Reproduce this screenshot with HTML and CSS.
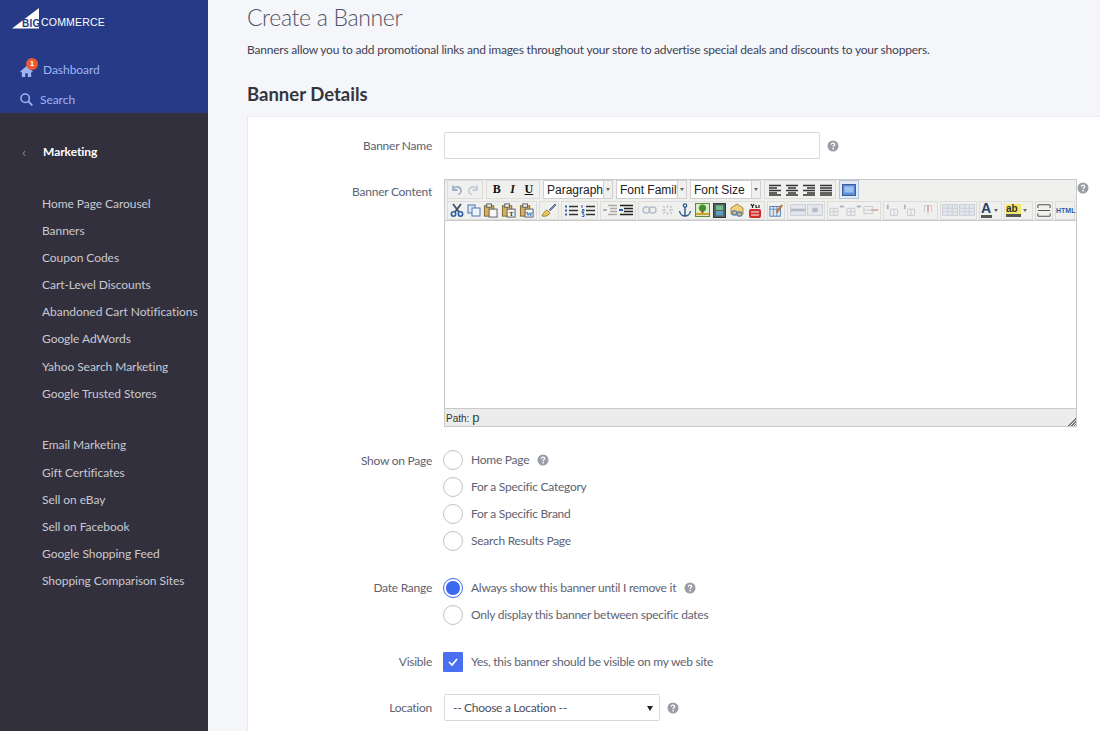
FILE: index.html
```html
<!DOCTYPE html>
<html lang="en">
<head>
    <meta charset="UTF-8">
    <meta name="viewport" content="width=device-width, initial-scale=1.0">
    <title>Create a Banner</title>
    <link rel="stylesheet" href="styles.css">
</head>
<body>
    <svg class="sprites" width="0" height="0">
        <symbol id="help" viewBox="0 0 12 12"><circle cx="6" cy="6" r="5.5" fill="#9a9ca6"/><path d="M4.3 4.6C4.4 3.6 5.1 3.1 6 3.1c1 0 1.7.6 1.7 1.4 0 1.2-1.6 1.2-1.6 2.4" fill="none" stroke="#fff" stroke-width="1.3"/><rect x="5.3" y="7.9" width="1.6" height="1.5" fill="#fff"/></symbol>
        <symbol id="lines-l" viewBox="0 0 14 12"><path d="M1 1.500h12M1 4h8M1 6.500h12M1 9h8M1 11h12" stroke="#333" stroke-width="1.300"/></symbol>
        <symbol id="lines-c" viewBox="0 0 14 12"><path d="M1 1.500h12M3 4h8M1 6.500h12M3 9h8M1 11h12" stroke="#333" stroke-width="1.300"/></symbol>
        <symbol id="lines-r" viewBox="0 0 14 12"><path d="M1 1.500h12M5 4h8M1 6.500h12M5 9h8M1 11h12" stroke="#333" stroke-width="1.300"/></symbol>
        <symbol id="lines-j" viewBox="0 0 14 12"><path d="M1 1.500h12M1 4h12M1 6.500h12M1 9h12M1 11h12" stroke="#333" stroke-width="1.300"/></symbol>
        <symbol id="paste" viewBox="0 0 16 16"><rect x="1.500" y="3" width="10" height="11" fill="#d4b060" stroke="#7d6326"/><rect x="4" y="1" width="5" height="3.500" fill="#eee" stroke="#555"/><rect x="6.500" y="6.500" width="8.500" height="8.500" fill="#f7f7f7" stroke="#556"/></symbol>
        <symbol id="row-props" viewBox="0 0 18 13"><rect x=".5" y=".5" width="17" height="12" fill="#e4e7ee" stroke="#c7cbd4"/><path d="M1 6.500h16" stroke="#b4bac6" stroke-width="3"/></symbol>
        <symbol id="cell-props" viewBox="0 0 18 13"><rect x=".5" y=".5" width="17" height="12" fill="#e4e7ee" stroke="#c7cbd4"/><rect x="6" y="4" width="6" height="5" fill="#b4bac6"/></symbol>
        <symbol id="row-ins" viewBox="0 0 18 13"><path d="M1 4h9M1 8h9M1 12h9M1 4v8M5.500 4v8M10 4v8" fill="none" stroke="#c4c8d1"/><path d="M12 2h5" stroke="#9fb4cc" stroke-width="2"/></symbol>
        <symbol id="row-del" viewBox="0 0 18 13"><path d="M1 2h10M1 6h10M1 10h10M1 2v8M11 2v8" fill="none" stroke="#c4c8d1"/><path d="M9 6h8" stroke="#e0a8a0" stroke-width="2"/></symbol>
        <symbol id="col-ins" viewBox="0 0 18 13"><path d="M5 5v7M9 5v7M13 5v7M5 5h8M5 12h8" fill="none" stroke="#c4c8d1"/><path d="M2 0v5" stroke="#9fb4cc" stroke-width="2"/></symbol>
        <symbol id="col-del" viewBox="0 0 18 13"><path d="M5 1v7M9 1v11M13 1v7M5 1h8" fill="none" stroke="#c4c8d1"/><path d="M9 1v7" stroke="#e0a8a0" stroke-width="2"/></symbol>
        <symbol id="grid" viewBox="0 0 18 13"><rect x=".5" y=".5" width="17" height="12" fill="#e4e7ee" stroke="#c7cbd4"/><path d="M1 4.500h16M1 8.500h16M6.500 1v11M11.500 1v11" stroke="#c7cbd4"/></symbol>
    </svg>

    <div class="page">
        <aside class="sidebar">
            <div class="sidebar-top">
                <div class="logo">
                    <svg class="logo-mark" width="28" height="21" viewBox="0 0 28 21"><polygon points="0,20.500 27,0 27,20.500" fill="#fff"/></svg>
                    <span class="logo-big">BIG</span>
                    <span class="logo-commerce">COMMERCE</span>
                </div>
                <a class="top-link dashboard">
                    <span class="home-icon">
                        <svg width="13" height="11" viewBox="0 0 15 13"><path d="M7.500 0 0 6.600l.9 1L2 6.700V13h4V8.500h3V13h4V6.700l1.100.9.9-1z" fill="#9db5f5"/></svg>
                        <span class="badge">1</span>
                    </span>
                    Dashboard
                </a>
                <a class="top-link search">
                    <svg width="13" height="13" viewBox="0 0 13 13"><circle cx="5.200" cy="5.200" r="4.200" fill="none" stroke="#9db5f5" stroke-width="1.500"/><path d="M8.300 8.300 12.300 12.300" stroke="#9db5f5" stroke-width="1.800"/></svg>
                    Search
                </a>
            </div>
            <nav class="sidebar-nav">
                <div class="nav-title"><span class="nav-back">&lsaquo;</span>Marketing</div>
                <ul class="nav-list">
                    <li>Home Page Carousel</li>
                    <li>Banners</li>
                    <li>Coupon Codes</li>
                    <li>Cart-Level Discounts</li>
                    <li>Abandoned Cart Notifications</li>
                    <li>Google AdWords</li>
                    <li>Yahoo Search Marketing</li>
                    <li>Google Trusted Stores</li>
                </ul>
                <ul class="nav-list">
                    <li>Email Marketing</li>
                    <li>Gift Certificates</li>
                    <li>Sell on eBay</li>
                    <li>Sell on Facebook</li>
                    <li>Google Shopping Feed</li>
                    <li>Shopping Comparison Sites</li>
                </ul>
            </nav>
        </aside>

        <main class="content">
            <h1>Create a Banner</h1>
            <p class="intro">Banners allow you to add promotional links and images throughout your store to advertise special deals and discounts to your shoppers.</p>
            <h2>Banner Details</h2>

            <section class="card">
                <div class="form-row">
                    <label class="form-label">Banner Name</label>
                    <div class="field inline">
                        <input class="text-input" type="text">
                        <svg class="help" width="12" height="12"><use href="#help"/></svg>
                    </div>
                </div>

                <div class="form-row editor-row">
                    <label class="form-label editor-label">Banner Content</label>
                    <div class="editor-wrap">
                        <div class="editor">
                            <div class="toolbar">
                                <div class="tb-row first">
                                    <span class="tb-group w36 faded">
                                        <svg width="14" height="14" viewBox="0 0 14 14"><path d="M3 6c2-3 7-3 8 1 .4 2-1 4-3 4.500M3 2.500V7h4.500" fill="none" stroke="#9fb0c8" stroke-width="1.800"/></svg>
                                        <svg width="14" height="14" viewBox="0 0 14 14"><path d="M11 6C9 3 4 3 3 7c-.4 2 1 4 3 4.500M11 2.500V7H6.500" fill="none" stroke="#c4cdd9" stroke-width="1.800"/></svg>
                                    </span>
                                    <span class="tb-group w54 letters"><b class="tb-b">B</b><b class="tb-i">I</b><b class="tb-u">U</b></span>
                                    <span class="tb-select w70"><span class="tb-select-text">Paragraph</span><span class="tb-caret"></span></span>
                                    <span class="tb-select w71"><span class="tb-select-text clip">Font Family</span><span class="tb-caret"></span></span>
                                    <span class="tb-select w71"><span class="tb-select-text">Font Size</span><span class="tb-caret"></span></span>
                                    <span class="tb-group w72">
                                        <svg width="14" height="12"><use href="#lines-l"/></svg>
                                        <svg width="14" height="12"><use href="#lines-c"/></svg>
                                        <svg width="14" height="12"><use href="#lines-r"/></svg>
                                        <svg width="14" height="12"><use href="#lines-j"/></svg>
                                    </span>
                                    <span class="tb-group w20 active">
                                        <svg width="14" height="12" viewBox="0 0 14 12"><rect x=".5" y=".5" width="13" height="11" fill="#5c8edb" stroke="#3a5c99"/><rect x="2.500" y="2.500" width="9" height="6" fill="#9fc1ee"/></svg>
                                    </span>
                                </div>
                                <div class="tb-row">
                                    <span class="tb-group w90">
                                        <svg width="14" height="14" viewBox="0 0 14 14"><path d="M3 1l6 8M11 1 5 9" stroke="#3f4f66" stroke-width="1.800"/><circle cx="3.500" cy="11" r="2.200" fill="none" stroke="#2f5fa8" stroke-width="1.600"/><circle cx="10.500" cy="11" r="2.200" fill="none" stroke="#2f5fa8" stroke-width="1.600"/></svg>
                                        <svg width="14" height="14" viewBox="0 0 14 14"><rect x="1" y="2" width="7" height="8" fill="#dfe8f5" stroke="#4f76ad"/><rect x="5" y="5" width="8" height="8" fill="#eef3fa" stroke="#4f76ad"/></svg>
                                        <svg width="15" height="15"><use href="#paste"/></svg>
                                        <span class="paste-wrap"><svg width="15" height="15"><use href="#paste"/></svg><i class="paste-mark">T</i></span>
                                        <span class="paste-wrap"><svg width="15" height="15"><use href="#paste"/></svg><i class="paste-mark word">W</i></span>
                                    </span>
                                    <span class="tb-group w20">
                                        <svg width="16" height="16" viewBox="0 0 16 16"><path d="M1 14c1-3 3-5 5-6l3 3c-1 2-4 4-8 3z" fill="#e7c65f" stroke="#8c6d1e" stroke-width=".8"/><path d="M8 8l6-6 1 1-6 6" fill="#7790b8" stroke="#475d82" stroke-width=".8"/></svg>
                                    </span>
                                    <span class="tb-group w37">
                                        <svg width="14" height="13" viewBox="0 0 14 13"><path d="M5 2.500h9M5 6.500h9M5 10.500h9" stroke="#333" stroke-width="1.300"/><path d="M1 2.500h2M1 6.500h2M1 10.500h2" stroke="#2a62b8" stroke-width="2"/></svg>
                                        <svg width="14" height="13" viewBox="0 0 14 13"><path d="M5 2.500h9M5 6.500h9M5 10.500h9" stroke="#333" stroke-width="1.300"/><path d="M1 1v3M1 5.500h2v1.500H1v1.500h2M1 10h2v2.500H1" fill="none" stroke="#2a62b8"/></svg>
                                    </span>
                                    <span class="tb-group w36">
                                        <svg width="14" height="13" viewBox="0 0 14 13"><path d="M5 1.500h9M7 4.500h7M7 7.500h7M5 10.500h9" stroke="#aaa" stroke-width="1.300"/><path d="M4 6H0" stroke="#aab6c8" stroke-width="2"/></svg>
                                        <svg width="14" height="13" viewBox="0 0 14 13"><path d="M1 1.500h13M5 4.500h9M5 7.500h9M1 10.500h13" stroke="#222" stroke-width="1.300"/><path d="M0 6h4" stroke="#2a62b8" stroke-width="2"/></svg>
                                    </span>
                                    <span class="tb-group w127">
                                        <svg width="15" height="10" viewBox="0 0 15 10"><rect x="1" y="2" width="7" height="6" rx="3" fill="none" stroke="#b6bfcc" stroke-width="1.500"/><rect x="7" y="2" width="7" height="6" rx="3" fill="none" stroke="#b6bfcc" stroke-width="1.500"/></svg>
                                        <svg width="15" height="12" viewBox="0 0 15 12"><path d="M2 6h4M9 6h4M7.500 1v3M7.500 8v3M3 2l2 2M12 2l-2 2M3 10l2-2M12 10l-2-2" stroke="#c2c9d4" stroke-width="1.300"/></svg>
                                        <svg width="14" height="14" viewBox="0 0 14 14"><circle cx="7" cy="2.500" r="1.700" fill="none" stroke="#2f5d8f" stroke-width="1.300"/><path d="M7 4v9M1.500 8c.5 3 3 5 5.500 5s5-2 5.500-5" fill="none" stroke="#2f5d8f" stroke-width="1.500"/></svg>
                                        <svg width="15" height="14" viewBox="0 0 15 14"><rect x=".5" y=".5" width="14" height="13" fill="#d8ecc2" stroke="#5d8a3a"/><circle cx="7.500" cy="5" r="3.500" fill="#3f8f35"/><rect x="6.500" y="7" width="2" height="4" fill="#8a5a2b"/><path d="M1 11h13" stroke="#d2a52f" stroke-width="2"/></svg>
                                        <svg width="13" height="15" viewBox="0 0 13 15"><rect x=".5" y=".5" width="12" height="14" fill="#55645f" stroke="#2f3a36"/><rect x="3" y="2.500" width="7" height="4.500" fill="#6fc08d"/><rect x="3" y="8" width="7" height="4.500" fill="#5f9fc2"/></svg>
                                        <svg width="16" height="15" viewBox="0 0 16 15"><path d="M2 5 8 1l6 4v6H2z" fill="#f0cf7f" stroke="#a98a3a"/><rect x="3" y="8" width="5" height="4" rx="2" fill="none" stroke="#5d7fa8" stroke-width="1.300"/><rect x="8" y="9" width="5" height="4" rx="2" fill="none" stroke="#5d7fa8" stroke-width="1.300"/></svg>
                                        <svg width="14" height="15" viewBox="0 0 14 15"><rect x="1" y="6" width="12" height="9" rx="2" fill="#d32a2a"/><path d="M3 1l1.500 2.500L6 1M4.500 3.500V5M8 2v2.500h1.500M11 2v3" fill="none" stroke="#222" stroke-width="1.200"/><path d="M3 9h8M3 12h8" stroke="#fff" stroke-width="1.200"/></svg>
                                    </span>
                                    <span class="tb-group w18">
                                        <svg width="16" height="15" viewBox="0 0 16 15"><rect x="1" y="3" width="12" height="11" fill="#dfe8f5" stroke="#4a74b0"/><path d="M1 6h12M5 3v11M9 3v11" stroke="#4a74b0" stroke-width=".8"/><path d="M8 9l6-8 1.500 1-6 8z" fill="#d88a2a" stroke="#8a4d12" stroke-width=".6"/></svg>
                                    </span>
                                    <span class="tb-group w38">
                                        <svg width="16" height="12"><use href="#row-props"/></svg>
                                        <svg width="16" height="12"><use href="#cell-props"/></svg>
                                    </span>
                                    <span class="tb-group w54">
                                        <svg width="16" height="13"><use href="#row-ins"/></svg>
                                        <svg width="16" height="13"><use href="#row-ins"/></svg>
                                        <svg width="16" height="13"><use href="#row-del"/></svg>
                                    </span>
                                    <span class="tb-group w55">
                                        <svg width="16" height="13"><use href="#col-ins"/></svg>
                                        <svg width="16" height="13"><use href="#col-ins"/></svg>
                                        <svg width="16" height="13"><use href="#col-del"/></svg>
                                    </span>
                                    <span class="tb-group w37">
                                        <svg width="16" height="12"><use href="#grid"/></svg>
                                        <svg width="16" height="12"><use href="#grid"/></svg>
                                    </span>
                                    <span class="tb-group w23 color-btn">
                                        <span class="color-a">A</span><span class="tb-caret plain"></span>
                                    </span>
                                    <span class="tb-group w29 color-btn">
                                        <span class="color-ab">ab</span><span class="tb-caret plain"></span>
                                    </span>
                                    <span class="tb-group w18">
                                        <svg width="16" height="15" viewBox="0 0 16 15"><path d="M1 1h14M1 1v3.500M15 1v3.500M1 7.500h14M1 14v-3.500M15 14v-3.500M1 14h14" fill="none" stroke="#555" stroke-width="1.200"/></svg>
                                    </span>
                                    <span class="tb-group w20 html-btn">HTML</span>
                                </div>
                            </div>
                            <div class="editor-body"></div>
                            <div class="statusbar">Path: <span class="path-el">p</span><span class="resize"></span></div>
                        </div>
                        <svg class="help editor-help" width="12" height="12"><use href="#help"/></svg>
                    </div>
                </div>

                <div class="form-row">
                    <label class="form-label show-label">Show on Page</label>
                    <div class="choices">
                        <div class="choice"><span class="radio"></span>Home Page<svg class="help" width="12" height="12"><use href="#help"/></svg></div>
                        <div class="choice"><span class="radio"></span>For a Specific Category</div>
                        <div class="choice"><span class="radio"></span>For a Specific Brand</div>
                        <div class="choice"><span class="radio"></span>Search Results Page</div>
                    </div>
                </div>

                <div class="form-row">
                    <label class="form-label">Date Range</label>
                    <div class="choices">
                        <div class="choice"><span class="radio checked"></span>Always show this banner until I remove it<svg class="help" width="12" height="12"><use href="#help"/></svg></div>
                        <div class="choice"><span class="radio"></span>Only display this banner between specific dates</div>
                    </div>
                </div>

                <div class="form-row visible-row">
                    <label class="form-label">Visible</label>
                    <div class="choices">
                        <div class="choice">
                            <span class="checkbox"><svg width="10" height="8" viewBox="0 0 10 8"><path d="M1 4l3 3 5-6" fill="none" stroke="#fff" stroke-width="1.700"/></svg></span>
                            Yes, this banner should be visible on my web site
                        </div>
                    </div>
                </div>

                <div class="form-row">
                    <label class="form-label">Location</label>
                    <div class="field inline">
                        <div class="select-box">-- Choose a Location --<span class="select-arrow"></span></div>
                        <svg class="help" width="12" height="12"><use href="#help"/></svg>
                    </div>
                </div>
            </section>
        </main>
    </div>
</body>
</html>
```

FILE: styles.css
```css
* {
    box-sizing: border-box;
}
html, body {
    margin: 0;
    height: 100%;
    overflow: hidden;
}
body {
    font-family: "Lato", "Liberation Sans", sans-serif;
    font-size: 12px;
    letter-spacing: -0.21px;
    color: #5e6272;
    background: #f5f6f9;
}
.sprites {
    position: absolute;
}
.page {
    display: flex;
    height: 731px;
}

/* sidebar */
.sidebar {
    width: 208px;
    flex-shrink: 0;
    background: #32303c;
    letter-spacing: -0.05px;
}
.sidebar-top {
    height: 113px;
    background: #263a87;
    padding: 8px 0 0 12px;
}
.logo {
    position: relative;
    height: 21px;
    display: flex;
    align-items: center;
}
.logo-mark {
    position: absolute;
    left: 0;
    top: 0;
}
.logo-big {
    position: absolute;
    left: 10px;
    top: 10px;
    font: bold 10px/11px "Liberation Sans", sans-serif;
    letter-spacing: 0.2px;
    color: #263a87;
}
.logo-commerce {
    position: absolute;
    left: 29px;
    top: 7px;
    font: 10.500px/14px "Liberation Sans", sans-serif;
    letter-spacing: 0.2px;
    color: #fff;
}
.top-link {
    display: flex;
    align-items: center;
    color: #9db5f5;
}
.dashboard {
    margin: 32px 0 0 8px;
    height: 16px;
    gap: 8px;
}
.search {
    margin: 14px 0 0 8px;
    height: 16px;
    gap: 7px;
}
.home-icon {
    position: relative;
    display: block;
    width: 15px;
    height: 14px;
    padding-top: 4px;
}
.home-icon svg {
    display: block;
}
.badge {
    position: absolute;
    left: 6px;
    top: -4px;
    width: 12px;
    height: 12px;
    border-radius: 50%;
    background: #f0582f;
    color: #fff;
    font: bold 8px/12px "Liberation Sans", sans-serif;
    text-align: center;
}
.sidebar-nav {
    padding-top: 29px;
}
.nav-title {
    display: flex;
    align-items: center;
    height: 18px;
    padding-left: 22px;
    color: #fff;
    font-weight: bold;
}
.nav-back {
    width: 21px;
    color: #8d8c96;
    font-weight: normal;
    font-size: 14px;
}
.nav-list {
    list-style: none;
    margin: 0 0 24.400px;
    padding: 0 0 0 42px;
    color: #c9c9d1;
    white-space: nowrap;
}
.nav-title + .nav-list {
    margin-top: 29.500px;
}
.nav-list li {
    height: 27.200px;
    line-height: 27px;
}

/* main */
.content {
    flex: 1;
    min-width: 0;
    padding-left: 39px;
}
h1 {
    margin: 2px 0 0;
    font-size: 23px;
    line-height: 30px;
    font-weight: 300;
    letter-spacing: -0.33px;
    color: #4f5366;
}
.intro {
    margin: 10px 0 0;
    line-height: 16px;
    color: #3f4354;
}
h2 {
    margin: 24px 0 0;
    font-size: 18.500px;
    line-height: 24px;
    font-weight: bold;
    letter-spacing: 0;
    color: #33363f;
}
.card {
    margin-top: 10px;
    height: 640px;
    padding-top: 15px;
    background: #fff;
    border: 1px solid #e8eaef;
    border-right: none;
    letter-spacing: -0.25px;
}
.form-row {
    display: flex;
    gap: 12px;
    margin-bottom: 20px;
}
.editor-row {
    margin-bottom: 19px;
}
.visible-row {
    margin-bottom: 19px;
}
.form-label {
    width: 184px;
    flex-shrink: 0;
    text-align: right;
    line-height: 27px;
}
.editor-label {
    line-height: 26px;
}
.show-label {
    line-height: 29px;
}
.field.inline {
    display: flex;
    align-items: center;
    gap: 7px;
}
.text-input {
    width: 376px;
    height: 27px;
    border: 1px solid #d7d9e0;
    border-radius: 2px;
    background: #fff;
}
.help {
    flex-shrink: 0;
}

/* editor */
.editor-wrap {
    position: relative;
    width: 645px;
}
.editor {
    width: 633px;
    height: 248px;
    display: flex;
    flex-direction: column;
    border: 1px solid #c9c9c9;
    background: #fff;
    letter-spacing: 0;
}
.editor-help {
    position: absolute;
    right: 0;
    top: 3px;
}
.toolbar {
    background: #f0f0ee;
    height: 41px;
    padding: 0 0 0 2px;
    border-bottom: 1px solid #c9c9c9;
    flex-shrink: 0;
}
.tb-row {
    display: flex;
    gap: 2px;
    height: 20px;
    align-items: center;
}
.tb-row.first {
    gap: 3px;
    height: 19px;
    margin-bottom: 1px;
}
.tb-group {
    display: flex;
    align-items: center;
    justify-content: space-around;
    height: 19px;
    border: 1px solid #dcdcda;
    padding: 0 1px;
    flex-shrink: 0;
}
.w18 { width: 18px; }
.w20 { width: 20px; }
.w23 { width: 23px; }
.w29 { width: 29px; }
.w36 { width: 36px; }
.w37 { width: 37px; }
.w38 { width: 38px; }
.w54 { width: 54px; }
.w55 { width: 55px; }
.w70 { width: 70px; }
.w71 { width: 71px; }
.w72 { width: 72px; }
.w90 { width: 90px; }
.w127 { width: 127px; }
.active {
    border-color: #b0c4de;
    background: #e4e9f2;
}
.letters b {
    font-family: "Liberation Serif", serif;
    font-size: 12px;
    color: #111;
}
.tb-i {
    font-style: italic;
}
.tb-u {
    text-decoration: underline;
}
.paste-wrap {
    position: relative;
    display: block;
    width: 15px;
    height: 15px;
}
.paste-mark {
    position: absolute;
    left: 8px;
    top: 7px;
    font: bold 7px/8px "Liberation Serif", serif;
    color: #333;
}
.paste-mark.word {
    left: 7px;
    color: #2a62b8;
}
.tb-select {
    display: flex;
    height: 19px;
    flex-shrink: 0;
    border: 1px solid #cfcfcf;
    background: #fff;
}
.tb-select-text {
    flex: 1;
    min-width: 0;
    overflow: hidden;
    white-space: nowrap;
    padding-left: 3px;
    font-family: "Liberation Sans", sans-serif;
    font-size: 12px;
    line-height: 18px;
    color: #222;
}
.tb-caret {
    position: relative;
    flex-shrink: 0;
    width: 9px;
    background: #f0f0ee;
    border-left: 1px solid #cfcfcf;
}
.tb-caret::after {
    content: "";
    position: absolute;
    left: 2px;
    top: 7px;
    border: 2px solid transparent;
    border-top: 3px solid #666;
}
.tb-caret.plain {
    height: 17px;
    background: none;
    border: none;
}
.color-btn {
    justify-content: flex-start;
    padding: 0 0 0 1px;
}
.color-a {
    width: 13px;
    font: bold 14px/13px "Liberation Sans", sans-serif;
    color: #24406f;
    border-bottom: 3px solid #555;
}
.color-ab {
    width: 15px;
    font: bold 10px/10px "Liberation Sans", sans-serif;
    color: #333;
    background: #f1ea64;
    border-bottom: 3px solid #555;
}
.html-btn {
    font: bold 7px/17px "Liberation Sans", sans-serif;
    color: #2c5fa8;
    padding: 0;
}
.editor-body {
    flex: 1;
    background: #fff;
}
.statusbar {
    position: relative;
    height: 18px;
    flex-shrink: 0;
    padding-left: 1px;
    background: #ececec;
    border-top: 1px solid #c9c9c9;
    font: 10px/18px "Liberation Sans", sans-serif;
    color: #333;
}
.path-el {
    font-size: 13px;
    color: #2b4b2b;
}
.resize {
    position: absolute;
    right: 0;
    bottom: 0;
    width: 9px;
    height: 9px;
    background: repeating-linear-gradient(135deg, #ececec 0 1px, #777 1px 2px);
    clip-path: polygon(100% 0, 100% 100%, 0 100%);
}

/* choices */
.choices {
    display: flex;
    flex-direction: column;
    margin-left: -1px;
}
.choice {
    display: flex;
    align-items: center;
    height: 27px;
}
.choice .help {
    margin-left: 8px;
}
.radio {
    width: 20px;
    height: 20px;
    margin-right: 8px;
    border: 1px solid #bfc2cd;
    border-radius: 50%;
    background: #fff;
    flex-shrink: 0;
}
.radio.checked {
    border-color: #3d69ee;
    background: radial-gradient(circle, #3d69ee 0 6.500px, #fff 7.500px);
}
.checkbox {
    display: flex;
    align-items: center;
    justify-content: center;
    width: 20px;
    height: 20px;
    margin-right: 8px;
    border-radius: 1px;
    background: #4a6ff0;
    flex-shrink: 0;
}
.select-box {
    position: relative;
    width: 216px;
    height: 27px;
    padding-left: 8px;
    line-height: 25px;
    letter-spacing: -0.3px;
    border: 1px solid #d7d9e0;
    border-radius: 2px;
    background: #fff;
    color: #4a4e5e;
}
.select-arrow {
    position: absolute;
    right: 6px;
    top: 11px;
    border: 3px solid transparent;
    border-top: 5px solid #222;
}
```
